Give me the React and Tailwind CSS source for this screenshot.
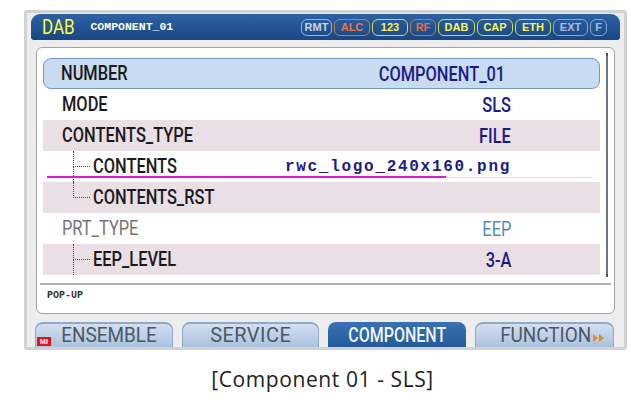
import React from "react";

const badges = [
  { t: "RMT", w: "w-[31px]", c: "border-[#9fb5d6] text-[#c9d5e8]" },
  { t: "ALC", w: "w-[36px]", c: "border-[#c77c45] text-[#e8783a]" },
  { t: "123", w: "w-[36px]", c: "border-[#d4e048] text-[#f4f25a]" },
  { t: "RF", w: "w-[26px]", c: "border-[#b47a4e] text-[#e8703a]" },
  { t: "DAB", w: "w-[37px]", c: "border-[#c9df44] text-[#f6f45c]" },
  { t: "CAP", w: "w-[36px]", c: "border-[#c9df44] text-[#f6f45c]" },
  { t: "ETH", w: "w-[36px]", c: "border-[#c9df44] text-[#f6f45c]" },
  { t: "EXT", w: "w-[35px]", c: "border-[#8ba5cc] text-[#a9bdd9]" },
  { t: "F", w: "w-[17px]", c: "border-[#8ba5cc] text-[#a9bdd9]" },
];

// narrow label text (Roboto squeezed to look like the device font)
const Label = ({ children, cls = "font-medium text-[#1a1a1a]" }) => (
  <span className={`inline-block origin-left scale-x-[0.82] font-['Roboto',sans-serif] text-[20px] leading-none ${cls}`}>
    {children}
  </span>
);

const Value = ({ children, cls = "font-medium text-[#1b1b88]" }) => (
  <span className={`inline-block origin-right scale-x-[0.82] font-['Roboto',sans-serif] text-[20px] leading-none ${cls}`}>
    {children}
  </span>
);

function Tree({ last }) {
  return (
    <div className="ml-[30px] mr-[3px] w-[17px] self-stretch flex flex-col">
      <div className="h-1/2 border-l border-b border-dotted border-[#444]" />
      <div className={last ? "h-1/2" : "h-1/2 border-l border-dotted border-[#444]"} />
    </div>
  );
}

function Row({ bg = "", children, right }) {
  return (
    <div className={`relative h-[31px] flex items-center pr-[89px] ${bg}`}>
      <div className="flex-1 flex items-center self-stretch">{children}</div>
      {right}
    </div>
  );
}

function Tab({ children, active, cls = "" }) {
  const skin = active
    ? "bg-gradient-to-b from-[#3a72b2] to-[#245a99]"
    : "border-t-2 border-x border-[#8fa9ca] bg-gradient-to-b from-[#d2dfef] to-[#aac2df]";
  return (
    <div className={`relative h-[25px] rounded-t-[8px] flex items-center ${skin} ${cls}`}>{children}</div>
  );
}

export default function App() {
  return (
    <div className="w-[637px] h-[405px] bg-white overflow-hidden">
      <div className="ml-[24px] mt-[10px] w-[603px] h-[340px] rounded-[3px] border-[3px] border-[#d2d2d2] bg-[#ededed] px-[4px] pt-[1px] flex flex-col">
        {/* header */}
        <div className="h-[26px] rounded-t-[9px] rounded-b-[3px] bg-gradient-to-b from-[#2c62a4] to-[#1b4684] flex items-center pl-[11px] pr-[13px]">
          <span className="inline-block origin-left scale-x-[0.85] font-['Roboto',sans-serif] text-[20px] text-[#ffff3a] leading-none">DAB</span>
          <span className="ml-[10px] font-['Liberation_Mono',monospace] font-bold text-[11.5px] text-white">COMPONENT_01</span>
          <div className="flex-1" />
          <div className="flex gap-[2px]">
            {badges.map((b) => (
              <div
                key={b.t}
                className={`${b.w} h-[17px] rounded-[6px] border-[1.5px] flex items-center justify-center font-['Liberation_Sans',sans-serif] font-bold text-[11px] ${b.c}`}
              >
                {b.t}
              </div>
            ))}
          </div>
        </div>

        {/* panel */}
        <div className="mt-[7px] mx-[5px] h-[267px] bg-white border border-[#a2a2a2] rounded-[6px] flex flex-col">
          <div className="flex items-start pl-[6px]">
            <div className="mt-[10px] w-[557px] flex flex-col">
              <div className="h-[31px] rounded-[8px] border-[1.5px] border-[#7298c9] bg-[#c9dbf1] flex items-center pl-[17px] pr-[94px]">
                <div className="flex-1"><Label>NUMBER</Label></div>
                <Value>COMPONENT_01</Value>
              </div>
              <Row right={<Value>SLS</Value>}>
                <span className="pl-[19px]"><Label>MODE</Label></span>
              </Row>
              <Row bg="bg-[#eadfe4]" right={<Value>FILE</Value>}>
                <span className="pl-[19px]"><Label>CONTENTS_TYPE</Label></span>
              </Row>
              <Row
                right={
                  <span className="font-['Liberation_Mono',monospace] font-bold text-[16px] tracking-[1.7px] text-[#1b1b88]">
                    rwc_logo_240x160.png
                  </span>
                }
              >
                <Tree />
                <span className="self-center"><Label>CONTENTS</Label></span>
                <div className="absolute left-[4px] bottom-[4px] w-[546px] h-[2px] flex">
                  <div className="w-[399px] h-[2px] bg-[#e316d6]" />
                  <div className="flex-1 h-[1px] mt-[1px] bg-[#dcdcdc]" />
                </div>
              </Row>
              <Row bg="bg-[#eadfe4]">
                <Tree last />
                <span className="self-center"><Label>CONTENTS_RST</Label></span>
              </Row>
              <Row right={<Value cls="text-[#4e8bc8]">EEP</Value>}>
                <span className="pl-[19px]"><Label cls="text-[#737373]">PRT_TYPE</Label></span>
              </Row>
              <Row bg="bg-[#eadfe4]" right={<Value>3-A</Value>}>
                <Tree />
                <span className="self-center"><Label>EEP_LEVEL</Label></span>
              </Row>
            </div>
            <div className="ml-[6px] mt-[5px] w-[2px] h-[224px] bg-[#6e7684] border-y-[3px] border-[#4a5060]" />
          </div>
          <div className="mt-[6px] mx-[3px] border-t-2 border-[#b0b0b0]" />
          <div className="pl-[10px] pt-[3px] font-['Liberation_Mono',monospace] font-bold text-[10px] text-[#333]">POP-UP</div>
        </div>

        {/* tabs */}
        <div className="mt-[8px] pl-[4px] flex gap-[9px]">
          <Tab cls="w-[138px] justify-center pl-[10px]">
            <span className="inline-block scale-x-[0.9] font-['Roboto',sans-serif] text-[21px] leading-none text-[#4c5766]">ENSEMBLE</span>
            <div className="absolute left-[1px] bottom-[1px] w-[14px] h-[9px] bg-[#e0161c] flex items-center justify-center font-['Liberation_Sans',sans-serif] font-bold text-[7px] leading-none text-white">MI</div>
          </Tab>
          <Tab cls="w-[137px] justify-center">
            <span className="inline-block scale-x-[0.95] font-['Roboto',sans-serif] text-[21px] leading-none tracking-[0.5px] text-[#4c5766]">SERVICE</span>
          </Tab>
          <Tab active cls="w-[138px] justify-center">
            <span className="inline-block scale-x-[0.8] font-['Roboto',sans-serif] font-medium text-[20px] leading-none text-[#f2f6fb]">COMPONENT</span>
          </Tab>
          <Tab cls="w-[139px] justify-end pr-[8px]">
            <span className="inline-block origin-right scale-x-[0.9] font-['Roboto',sans-serif] text-[21px] leading-none text-[#4c5766]">FUNCTION</span>
            <svg width="12" height="8" viewBox="0 0 12 8" className="ml-[2px] mt-[4px]">
              <path d="M0 0L5 4L0 8Z M6 0L11 4L6 8Z" fill="#f28a22" />
            </svg>
          </Tab>
        </div>
      </div>

      <div className="mt-[14px] pl-[8px] text-center font-['Open_Sans',sans-serif] text-[21px] tracking-[0.6px] text-[#222]">
        [Component 01 - SLS]
      </div>
    </div>
  );
}
